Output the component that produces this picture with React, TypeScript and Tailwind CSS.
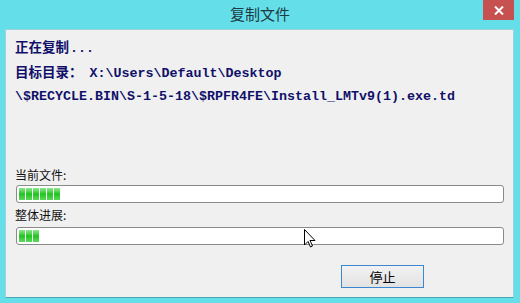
import React from "react";

const cjk = '"Noto Sans CJK SC", "Noto Sans", sans-serif';
const mono = '"Liberation Mono", "Noto Sans CJK SC", monospace';

function Bar({ blocks }: { blocks: number }) {
  return (
    <div className="h-[18px] w-[488px] rounded-[3px] border border-[#8a8a8a] bg-white flex items-center pl-[2px] gap-[1px]">
      {Array.from({ length: blocks }).map((_, i) => (
        <div
          key={i}
          className="h-[12px] w-[6px] bg-gradient-to-b from-[#8ae88a] via-[#18c418] to-[#5cd85c]"
        />
      ))}
    </div>
  );
}

export default function App() {
  return (
    <div className="relative w-[520px] h-[303px] bg-[#64dfe9] flex flex-col overflow-hidden">
      <div className="relative h-[29px] flex items-center justify-center">
        <span
          className="text-[15px] text-[#1e3a44] pb-[1px]"
          style={{ fontFamily: cjk }}
        >
          复制文件
        </span>
        <div className="absolute right-[6px] top-0 w-[31px] h-[20px] bg-[#c75050] flex items-center justify-center">
          <svg width="10" height="9" viewBox="0 0 10 9">
            <path d="M1 0.5 L9 8.5 M9 0.5 L1 8.5" stroke="white" strokeWidth="2" />
          </svg>
        </div>
      </div>
      <div className="ml-[5px] w-[509px] h-[269px] bg-[#f0f0f0] border border-[#9bd3da] border-b-[#4aa8b4] pl-[9px] pt-[4px] flex flex-col">
        <div className="leading-[25px] h-[25px] font-bold text-[#10106a] text-[13.5px]" style={{ fontFamily: cjk }}>
          正在复制<span style={{ fontFamily: mono }} className="text-[13.33px] ml-[1px]">...</span>
        </div>
        <div className="leading-[25px] h-[25px] font-bold text-[#10106a] text-[13.5px] whitespace-nowrap" style={{ fontFamily: cjk }}>
          目标目录：<span style={{ fontFamily: mono }} className="text-[13.33px] ml-[7px]">X:\Users\Default\Desktop</span>
        </div>
        <div className="leading-[25px] h-[25px] font-bold text-[#10106a] text-[13.33px] whitespace-nowrap" style={{ fontFamily: mono }}>
          \$RECYCLE.BIN\S-1-5-18\$RPFR4FE\Install_LMTv9(1).exe.td
        </div>
        <div className="mt-[58px] h-[16px] leading-[16px] text-[12px] text-[#111]" style={{ fontFamily: cjk }}>
          当前文件:
        </div>
        <div className="mt-[2px] ml-[1px]">
          <Bar blocks={6} />
        </div>
        <div className="mt-[4px] h-[16px] leading-[16px] text-[12px] text-[#111]" style={{ fontFamily: cjk }}>
          整体进展:
        </div>
        <div className="mt-[4px] ml-[1px]">
          <Bar blocks={3} />
        </div>
        <div className="mt-[20px] ml-[326px] w-[83px] h-[23px] border border-[#3c88d0] bg-gradient-to-b from-[#f2f2f2] to-[#e2e2e2] flex items-center justify-center text-[13px] text-black" style={{ fontFamily: cjk }}>
          停止
        </div>
      </div>
      <svg className="absolute left-[304px] top-[229px]" width="12" height="19" viewBox="0 0 12 19">
        <path d="M0.5 0.5 L0.5 16 L4 12.5 L6.5 18 L8.5 17 L6 11.5 L11 11.5 Z" fill="white" stroke="black" strokeWidth="1" />
      </svg>
    </div>
  );
}
